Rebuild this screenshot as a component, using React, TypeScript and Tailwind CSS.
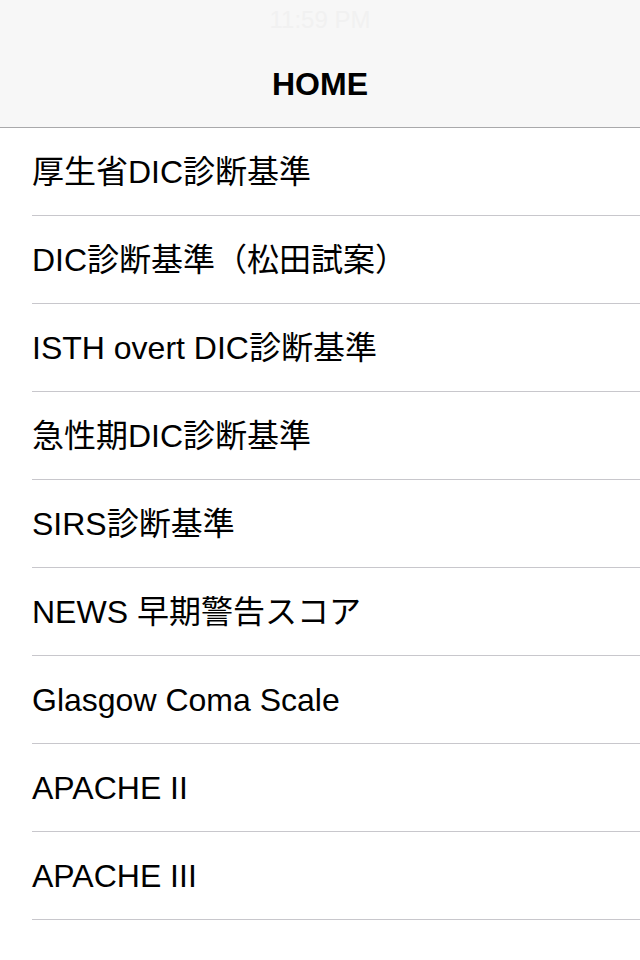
import * as React from "react";

const items = [
  "厚生省DIC診断基準",
  "DIC診断基準（松田試案）",
  "ISTH overt DIC診断基準",
  "急性期DIC診断基準",
  "SIRS診断基準",
  "NEWS 早期警告スコア",
  "Glasgow Coma Scale",
  "APACHE II",
  "APACHE III",
];

export default function App() {
  return (
    <div className="w-[640px] h-[960px] bg-white overflow-hidden font-['Liberation_Sans','Noto_Sans_CJK_JP',sans-serif]">
      <header className="h-[128px] bg-[#f7f7f7] border-b border-[#a9a9ab] flex flex-col">
        <div className="h-[40px] flex items-center justify-center text-[24px] text-[#f1f1f1]">11:59 PM</div>
        <div className="flex-1 flex items-center justify-center">
          <h1 className="text-[32px] font-bold text-black leading-none">HOME</h1>
        </div>
      </header>
      <ul className="pl-[32px]">
        {items.map((t) => (
          <li key={t} className="h-[88px] border-b border-[#c8c7cc] flex items-center text-[32px] text-black leading-none">
            {t}
          </li>
        ))}
      </ul>
    </div>
  );
}
